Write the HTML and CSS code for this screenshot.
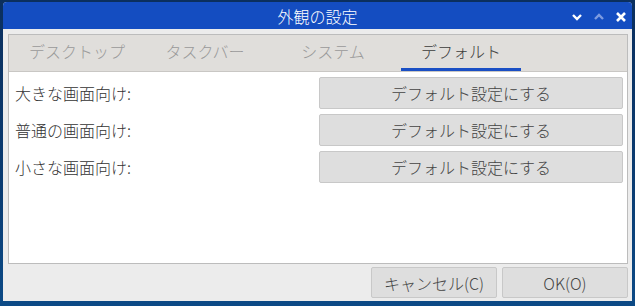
FILE: index.html
```html
<!DOCTYPE html>
<html lang="ja">
<head>
    <meta charset="UTF-8">
    <title>外観の設定</title>
    <link rel="stylesheet" href="styles.css">
</head>
<body>
    <div class="window">
        <div class="titlebar">
            <span class="title">外観の設定</span>
            <div class="controls">
                <svg width="12" height="10" viewBox="0 0 12 10"><path d="M2 3 L6 7 L10 3" fill="none" stroke="#ffffff" stroke-width="2.4"/></svg>
                <svg width="12" height="10" viewBox="0 0 12 10"><path d="M2 7 L6 3 L10 7" fill="none" stroke="#7d9be0" stroke-width="2.4"/></svg>
                <svg width="12" height="12" viewBox="0 0 12 12"><path d="M2 2 L10 10 M10 2 L2 10" fill="none" stroke="#ffffff" stroke-width="2.6"/></svg>
            </div>
        </div>
        <div class="content">
            <div class="notebook">
                <div class="tabs">
                    <div class="tab">デスクトップ</div>
                    <div class="tab">タスクバー</div>
                    <div class="tab">システム</div>
                    <div class="tab active">デフォルト</div>
                </div>
                <div class="panel">
                    <div class="row">
                        <span class="label">大きな画面向け:</span>
                        <button class="btn wide">デフォルト設定にする</button>
                    </div>
                    <div class="row">
                        <span class="label">普通の画面向け:</span>
                        <button class="btn wide">デフォルト設定にする</button>
                    </div>
                    <div class="row">
                        <span class="label">小さな画面向け:</span>
                        <button class="btn wide">デフォルト設定にする</button>
                    </div>
                </div>
            </div>
            <div class="footer">
                <button class="btn action">キャンセル(C)</button>
                <button class="btn action">OK(O)</button>
            </div>
        </div>
    </div>
</body>
</html>
```

FILE: styles.css
```css
body {
    margin: 0;
    width: 635px;
    height: 306px;
    overflow: hidden;
    background: linear-gradient(180deg, #0b2f5e 0%, #0a3c72 60%, #0c4a86 100%);
    font-family: "Noto Sans CJK JP", "Noto Sans", sans-serif;
}
.window {
    margin: 2px 0 0 3px;
    width: 629px;
    height: 299px;
    background: #ececec;
    border-radius: 4px 4px 0 0;
    display: flex;
    flex-direction: column;
}
.titlebar {
    height: 29px;
    background: #144dc1;
    border-radius: 4px 4px 0 0;
    position: relative;
    display: flex;
    align-items: center;
    justify-content: center;
}
.title {
    color: #ffffff;
    font-size: 16px;
    font-weight: 300;
}
.controls {
    position: absolute;
    right: 5px;
    top: 9px;
    display: flex;
    gap: 10px;
    align-items: center;
}
.content {
    flex: 1;
    padding: 5px 4px 3px 5px;
    display: flex;
    flex-direction: column;
}
.notebook {
    height: 228px;
    border: 1px solid #bcbcbc;
    background: #ffffff;
    display: flex;
    flex-direction: column;
}
.tabs {
    height: 36px;
    background: #e0dedb;
    border-bottom: 1px solid #c9c7c4;
    display: flex;
    gap: 8px;
    padding-left: 8px;
}
.tab {
    width: 120px;
    text-align: center;
    font-size: 16px;
    font-weight: 300;
    color: #999999;
    line-height: 33px;
    border-bottom: 3px solid transparent;
}
.tab.active {
    color: #3c3c3c;
    border-bottom-color: #1a4fc4;
}
.panel {
    padding: 5px 4px 0 6px;
    display: flex;
    flex-direction: column;
    gap: 5px;
}
.row {
    display: flex;
    align-items: center;
    height: 32px;
}
.label {
    flex: 1;
    font-size: 16px;
    font-weight: 300;
    color: #333333;
}
.btn {
    font-family: "Noto Sans CJK JP", "Noto Sans", sans-serif;
    font-size: 16px;
    font-weight: 300;
    color: #444444;
    background: #dedede;
    border: 1px solid #c8c8c8;
    border-radius: 2px;
    padding: 0;
}
.wide {
    width: 304px;
    height: 32px;
}
.footer {
    margin-top: 3px;
    display: flex;
    justify-content: flex-end;
    gap: 5px;
}
.action {
    width: 126px;
    height: 31px;
}
```
